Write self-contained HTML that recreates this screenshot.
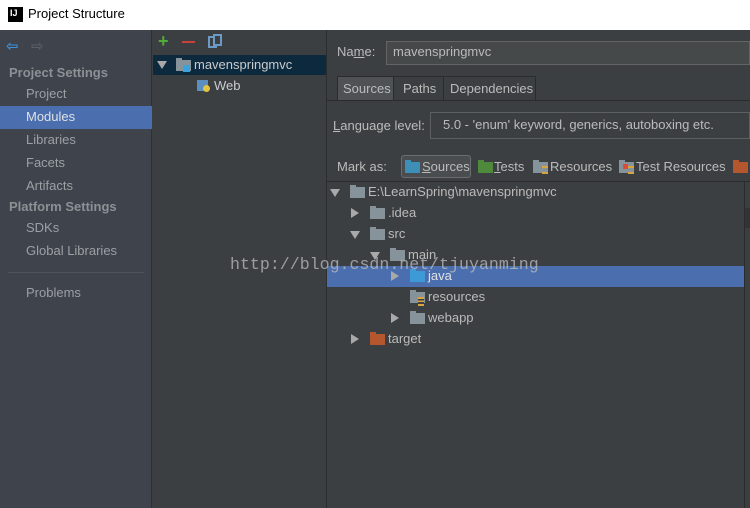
<!DOCTYPE html>
<html><head><style>
*{margin:0;padding:0;box-sizing:border-box}
body{width:750px;height:508px;overflow:hidden;background:#3c3f41;font-family:"Segoe UI","Liberation Sans","DejaVu Sans",sans-serif;font-size:13px;color:#bbbbbb;position:relative}
.a{position:absolute;white-space:nowrap}
.fd{position:absolute;width:15px;height:11px;background:#87939a}
.fd:before{content:"";position:absolute;left:0;top:-2px;width:6px;height:3px;background:inherit}
.tri{position:absolute;width:0;height:0}
.tr{border-left:8px solid #a9a9a9;border-top:5px solid transparent;border-bottom:5px solid transparent}
.td{border-top:8px solid #a9a9a9;border-left:5px solid transparent;border-right:5px solid transparent}
</style></head><body>
<div class="a" style="left:0;top:0;width:750px;height:30px;background:#fff"></div>
<div class="a" style="left:8px;top:7px;width:15px;height:15px;background:#000;color:#fff;font:bold 9px 'Liberation Sans';padding:1px 0 0 2px">IJ</div>
<div class="a" style="left:28px;top:6px;color:#000;font-size:13px">Project Structure</div>
<div class="a" style="left:0;top:30px;width:152px;height:478px;background:#3e434c;border-right:1px solid #2e3133"></div>
<div class="a" style="left:6px;top:37px;color:#3d8fd6;font-size:15px;font-weight:bold">⇦</div>
<div class="a" style="left:31px;top:37px;color:#5a5e63;font-size:15px;font-weight:bold">⇨</div>
<div class="a" style="left:9px;top:65px;font-weight:bold;color:#8d9094">Project Settings</div>
<div class="a" style="left:26px;top:86px;color:#9da0a3">Project</div>
<div class="a" style="left:0;top:106px;width:152px;height:23px;background:#4b6eaf"></div>
<div class="a" style="left:26px;top:109px;color:#dfe1e5">Modules</div>
<div class="a" style="left:26px;top:132px;color:#9da0a3">Libraries</div>
<div class="a" style="left:26px;top:155px;color:#9da0a3">Facets</div>
<div class="a" style="left:26px;top:178px;color:#9da0a3">Artifacts</div>
<div class="a" style="left:9px;top:199px;font-weight:bold;color:#8d9094">Platform Settings</div>
<div class="a" style="left:26px;top:220px;color:#9da0a3">SDKs</div>
<div class="a" style="left:26px;top:243px;color:#9da0a3">Global Libraries</div>
<div class="a" style="left:8px;top:272px;width:136px;height:1px;background:#4f535a"></div>
<div class="a" style="left:26px;top:285px;color:#9da0a3">Problems</div>
<div class="a" style="left:326px;top:30px;width:1px;height:478px;background:#2b2d2f"></div>
<div class="a" style="left:158px;top:31px;color:#4fad3c;font-size:18px;font-weight:bold">+</div>
<div class="a" style="left:182px;top:41px;width:13px;height:2px;background:#c7433a"></div>
<div class="a" style="left:208px;top:36px;width:9px;height:12px;border:2px solid #6b9ac4"></div>
<div class="a" style="left:213px;top:34px;width:9px;height:12px;border:2px solid #6b9ac4;background:#3c3f41"></div>
<div class="a" style="left:153px;top:55px;width:173px;height:20px;background:#0d293e"></div>
<div class="tri td" style="left:157px;top:61px"></div>
<div class="fd" style="left:176px;top:60px"></div>
<div class="a" style="left:183px;top:65px;width:7px;height:7px;background:#3ba3dc"></div>
<div class="a" style="left:194px;top:57px;color:#c9cbcd">mavenspringmvc</div>
<div class="a" style="left:197px;top:80px;width:11px;height:11px;background:#5c8fbf"></div>
<div class="a" style="left:203px;top:85px;width:7px;height:7px;border-radius:50%;background:#e2c440"></div>
<div class="a" style="left:214px;top:78px;color:#c9cbcd">Web</div>
<div class="a" style="left:337px;top:44px">Na<u>m</u>e:</div>
<div class="a" style="left:386px;top:41px;width:364px;height:24px;background:#45494a;border:1px solid #646464;padding:2px 6px;color:#bbb">mavenspringmvc</div>
<div class="a" style="left:337px;top:76px;width:57px;height:25px;background:#4e5254;border:1px solid #2b2b2b;padding:4px 5px">Sources</div>
<div class="a" style="left:393px;top:76px;width:51px;height:25px;border:1px solid #2b2b2b;padding:4px 9px">Paths</div>
<div class="a" style="left:443px;top:76px;width:93px;height:25px;border:1px solid #2b2b2b;padding:4px 6px">Dependencies</div>
<div class="a" style="left:327px;top:100px;width:423px;height:1px;background:#2b2b2b"></div>
<div class="a" style="left:333px;top:118px"><u>L</u>anguage level:</div>
<div class="a" style="left:430px;top:112px;width:320px;height:27px;border:1px solid #5e6060;padding:4px 12px;color:#bbb">5.0 - 'enum' keyword, generics, autoboxing etc.</div>
<div class="a" style="left:337px;top:159px">Mark as:</div>
<div class="a" style="left:401px;top:155px;width:70px;height:23px;background:#4a4d50;border:1px solid #6b6e70;border-radius:3px"></div>
<div class="fd" style="left:405px;top:162px;background:#3d8fb8"></div>
<div class="a" style="left:422px;top:159px"><u>S</u>ources</div>
<div class="fd" style="left:478px;top:162px;background:#4f8a3c"></div>
<div class="a" style="left:494px;top:159px"><u>T</u>ests</div>
<div class="fd" style="left:533px;top:162px"></div>
<div class="a" style="left:542px;top:166px;width:6px;height:8px;border-top:2px solid #d9a53c;border-bottom:2px solid #d9a53c"></div>
<div class="a" style="left:550px;top:159px">Resources</div>
<div class="fd" style="left:619px;top:162px"></div>
<div class="a" style="left:623px;top:164px;width:5px;height:5px;background:#d94c3a"></div>
<div class="a" style="left:628px;top:166px;width:6px;height:8px;border-top:2px solid #d9a53c;border-bottom:2px solid #d9a53c"></div>
<div class="a" style="left:636px;top:159px">Test Resources</div>
<div class="fd" style="left:733px;top:162px;background:#b4572f"></div>
<div class="a" style="left:327px;top:181px;width:423px;height:1px;background:#2b2b2b"></div>
<div class="a" style="left:744px;top:182px;width:1px;height:326px;background:#2b2b2b"></div>
<div class="a" style="left:745px;top:208px;width:5px;height:20px;background:#333"></div>
<div class="a" style="left:327px;top:266px;width:417px;height:21px;background:#4b6eaf"></div>
<div class="tri td" style="left:330px;top:189px"></div><div class="fd" style="left:350px;top:187px"></div><div class="a" style="left:368px;top:184px">E:\LearnSpring\mavenspringmvc</div>
<div class="tri tr" style="left:351px;top:208px"></div><div class="fd" style="left:370px;top:208px"></div><div class="a" style="left:388px;top:205px">.idea</div>
<div class="tri td" style="left:350px;top:231px"></div><div class="fd" style="left:370px;top:229px"></div><div class="a" style="left:388px;top:226px">src</div>
<div class="tri td" style="left:370px;top:252px"></div><div class="fd" style="left:390px;top:250px"></div><div class="a" style="left:408px;top:247px">main</div>
<div class="tri tr" style="left:391px;top:271px"></div><div class="fd" style="left:410px;top:271px;background:#3d9ad6"></div><div class="a" style="left:428px;top:268px;color:#e0e2e5">java</div>
<div class="fd" style="left:410px;top:292px"></div><div class="a" style="left:418px;top:297px;width:6px;height:9px;border-top:2px solid #d9a53c;border-bottom:2px solid #d9a53c;background:linear-gradient(#3c3f41 0 35%,#d9a53c 35% 60%,#3c3f41 60%)"></div><div class="a" style="left:428px;top:289px">resources</div>
<div class="tri tr" style="left:391px;top:313px"></div><div class="fd" style="left:410px;top:313px"></div><div class="a" style="left:428px;top:310px">webapp</div>
<div class="tri tr" style="left:351px;top:334px"></div><div class="fd" style="left:370px;top:334px;background:#b4572f"></div><div class="a" style="left:388px;top:331px">target</div>
<div class="a" style="left:230px;top:255px;font-family:'Liberation Mono',monospace;font-size:16.6px;color:rgba(190,190,190,0.75)">http://blog.csdn.net/tjuyanming</div>
</body></html>
